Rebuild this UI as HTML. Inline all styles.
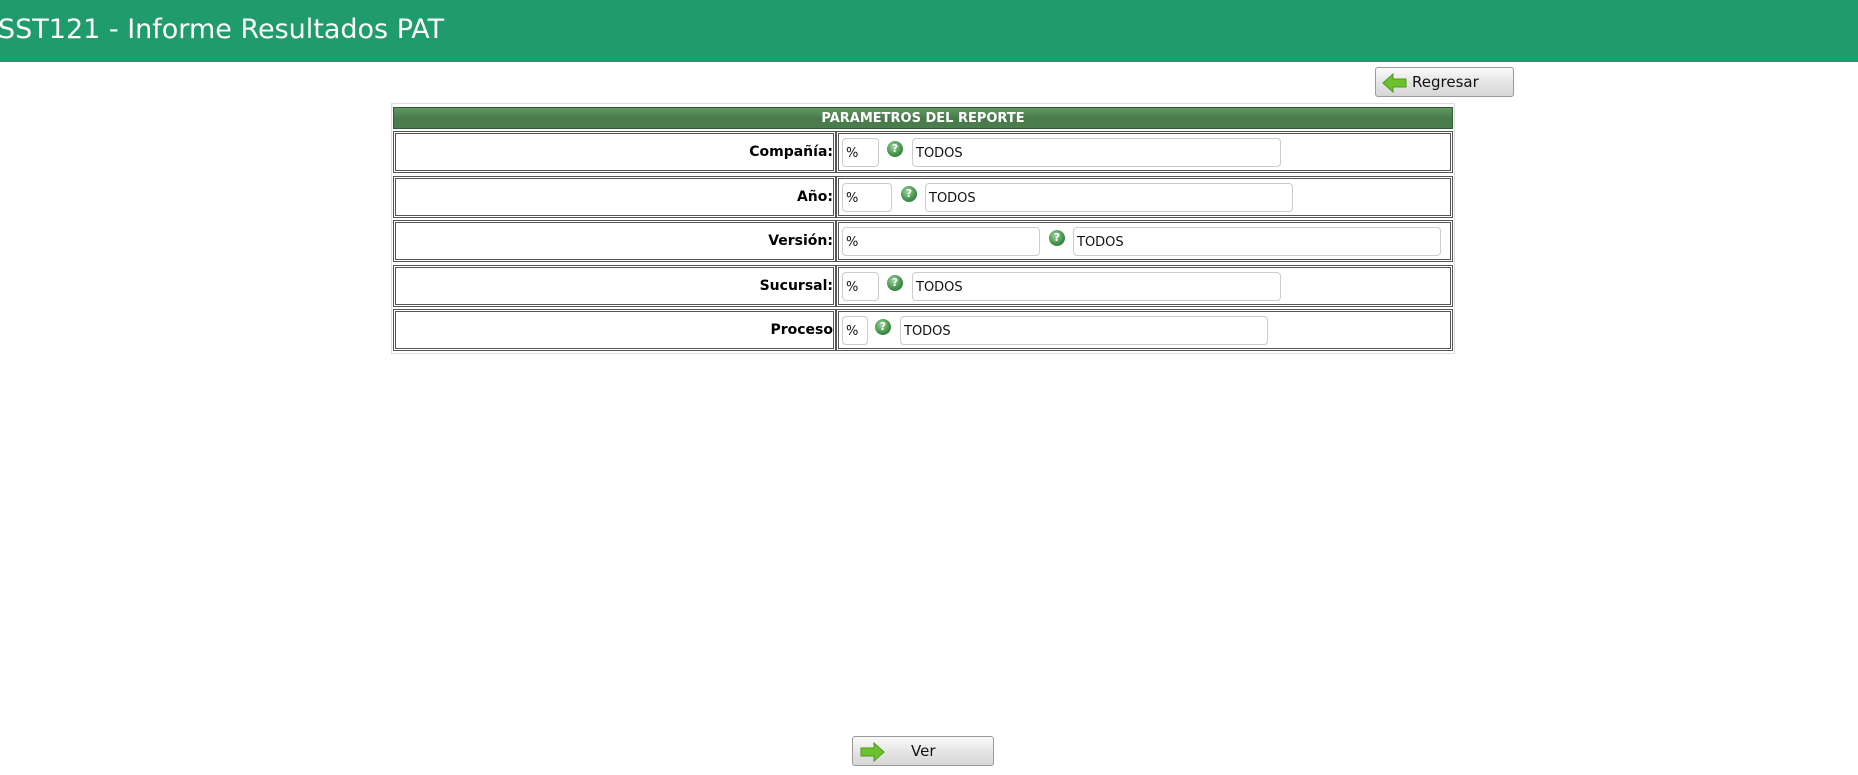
<!DOCTYPE html>
<html><head><meta charset="utf-8"><style>
body{margin:0;width:1858px;height:775px;background:#fff;position:relative;overflow:hidden;font-family:"DejaVu Sans","Liberation Sans",sans-serif}
.hdr{position:absolute;left:0;top:0;width:1858px;height:62px;background:#1f9b6c}
.hdr span{position:absolute;left:-2px;top:14px;color:#fff;font-size:27px}
.btn{position:absolute;border:1px solid #9a9a9a;border-radius:3px;background:linear-gradient(#fafafa,#e4e4e4 55%,#d6d6d6);box-sizing:border-box;font-size:15px;color:#111}
.btn svg{position:absolute;left:6px;top:5px}
.outer{position:absolute;left:391px;top:103px;width:1064px;height:251px;border:1px solid #ddd;box-sizing:border-box}
.band{position:absolute;left:393px;top:107px;width:1060px;height:22px;background:linear-gradient(#5f9a63,#4a7a4c 50%,#4a7d4d);color:#fff;font-weight:bold;font-size:13px;text-align:center;line-height:22px;border:1px solid #2f5a32;box-sizing:border-box}
.cell{position:absolute;border:3px double #555;box-sizing:border-box;height:42px}
.lbl{text-align:right;font-weight:bold;font-size:14px;line-height:36px}
.in{position:absolute;height:29px;border:1px solid #ccc;border-radius:4px;box-sizing:border-box;font-size:13px;line-height:29px;padding-left:3px;color:#111;font-family:"DejaVu Sans",sans-serif;background:#fff}
.q{position:absolute;width:16px;height:16px;border-radius:50%;background:radial-gradient(circle at 40% 35%,#9ad39b,#3f8f48 60%,#2c6e34);color:#fff;font-size:11px;font-weight:bold;text-align:center;line-height:16px}
</style></head><body>
<div class="hdr"><span>SST121 - Informe Resultados PAT</span></div>
<div class="btn" style="left:1375px;top:67px;width:139px;height:30px"><svg width="26" height="20" viewBox="0 0 26 20"><path d="M1 10 L11 1 L11 6 L24 6 L24 14 L11 14 L11 19 Z" fill="#6cc22e" stroke="#4c9a1c" stroke-width="1"/></svg><span style="position:absolute;left:36px;top:5px">Regresar</span></div>
<div class="outer"></div>
<div class="band">PARAMETROS DEL REPORTE</div>

<div class="cell lbl" style="left:393px;top:131px;width:443px">Compañía:</div>
<div class="cell" style="left:836px;top:131px;width:617px"></div>
<div class="in" style="left:842px;top:138px;width:37px">%</div><div class="q" style="left:887px;top:141px">?</div><div class="in" style="left:912px;top:138px;width:369px">TODOS</div>

<div class="cell lbl" style="left:393px;top:176px;width:443px">Año:</div>
<div class="cell" style="left:836px;top:176px;width:617px"></div>
<div class="in" style="left:842px;top:183px;width:50px">%</div><div class="q" style="left:901px;top:186px">?</div><div class="in" style="left:925px;top:183px;width:368px">TODOS</div>

<div class="cell lbl" style="left:393px;top:220px;width:443px">Versión:</div>
<div class="cell" style="left:836px;top:220px;width:617px"></div>
<div class="in" style="left:842px;top:227px;width:198px">%</div><div class="q" style="left:1049px;top:230px">?</div><div class="in" style="left:1073px;top:227px;width:368px">TODOS</div>

<div class="cell lbl" style="left:393px;top:265px;width:443px">Sucursal:</div>
<div class="cell" style="left:836px;top:265px;width:617px"></div>
<div class="in" style="left:842px;top:272px;width:37px">%</div><div class="q" style="left:887px;top:275px">?</div><div class="in" style="left:912px;top:272px;width:369px">TODOS</div>

<div class="cell lbl" style="left:393px;top:309px;width:443px">Proceso</div>
<div class="cell" style="left:836px;top:309px;width:617px"></div>
<div class="in" style="left:842px;top:316px;width:26px">%</div><div class="q" style="left:875px;top:319px">?</div><div class="in" style="left:900px;top:316px;width:368px">TODOS</div>

<div class="btn" style="left:852px;top:736px;width:142px;height:30px"><svg width="26" height="20" viewBox="0 0 26 20"><path d="M25 10 L15 1 L15 6 L2 6 L2 14 L15 14 L15 19 Z" fill="#6cc22e" stroke="#4c9a1c" stroke-width="1"/></svg><span style="position:absolute;left:58px;top:5px">Ver</span></div>
</body></html>
